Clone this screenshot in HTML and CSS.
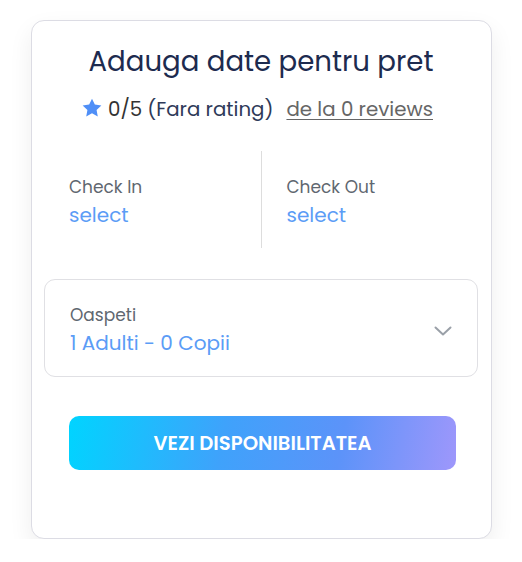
FILE: index.html
```html
<!DOCTYPE html>
<html lang="ro">
<head>
<meta charset="utf-8">
<title>Adauga date pentru pret</title>
<link rel="stylesheet" href="styles.css">
</head>
<body>
<div class="card">
  <h2 class="title">Adauga date pentru pret</h2>
  <div class="rating">
    <svg class="star" viewBox="0 0 24 24" width="22" height="22"><path d="M12 1.8l3.1 6.5 7.1.9-5.2 4.9 1.3 7.1L12 17.8l-6.3 3.4 1.3-7.1-5.2-4.9 7.1-.9z" fill="#4f8ff7"/></svg>
    <span class="score">0/5</span>
    <span class="norating">(Fara rating)</span>
    <a class="reviews" href="#">de la 0 reviews</a>
  </div>
  <div class="dates">
    <div class="date">
      <span class="label">Check In</span>
      <span class="value">select</span>
    </div>
    <div class="date">
      <span class="label">Check Out</span>
      <span class="value">select</span>
    </div>
  </div>
  <div class="guests">
    <div class="guests-text">
      <span class="label">Oaspeti</span>
      <span class="value">1 Adulti - 0 Copii</span>
    </div>
    <svg class="chevron" viewBox="0 0 18 10" width="18" height="10"><path d="M1.5 1.5L9 8.5l7.5-7" fill="none" stroke="#9aa0a8" stroke-width="2" stroke-linecap="round" stroke-linejoin="round"/></svg>
  </div>
  <button class="cta">VEZI DISPONIBILITATEA</button>
</div>
</body>
</html>
```
FILE: styles.css
```css
* { box-sizing: border-box; }
body {
  margin: 0;
  background: #fff;
  font-family: Poppins, "Open Sans", sans-serif;
}
.card {
  margin: 20px 0 0 31px;
  width: 461px;
  height: 519px;
  background: #fff;
  border: 1px solid #dcdce4;
  border-radius: 13px;
  box-shadow: 0 10px 24px rgba(0,0,0,0.07);
  padding: 23px 13px 0 12px;
  display: flex;
  flex-direction: column;
}
.title {
  margin: 0;
  font-weight: 400;
  font-size: 27.6px;
  line-height: 36px;
  color: #1d2b4f;
  text-align: center;
}
.rating {
  margin-top: 15px;
  display: flex;
  align-items: center;
  justify-content: center;
  gap: 5px;
  font-size: 19.8px;
  line-height: 28px;
  padding-right: 8px;
}
.star { margin-top: -3px; }
.score { color: #333; }
.norating { color: #2e3a59; margin-right: 8px; }
.reviews { color: #666; text-decoration: underline; text-underline-offset: 3px; }
.dates {
  margin-top: 28px;
  height: 97px;
  display: flex;
}
.date {
  flex: 1;
  display: flex;
  flex-direction: column;
  justify-content: center;
  padding-left: 25px;
  padding-top: 6px;
}
.date + .date { border-left: 1px solid #ddd; }
.label {
  font-size: 17px;
  line-height: 22px;
  color: #5f6770;
}
.value {
  font-size: 20px;
  line-height: 28px;
  color: #5b9cf6;
  margin-top: 3px;
}
.guests {
  margin-top: 31px;
  height: 98px;
  border: 1px solid #e0e0e4;
  border-radius: 11px;
  display: flex;
  align-items: center;
  justify-content: space-between;
  padding: 0 25px 0 25px;
}
.guests-text {
  display: flex;
  flex-direction: column;
  padding-top: 4px;
}
.chevron { margin-top: 6px; }
.cta {
  margin: 39px 0 0 25px;
  width: 387px;
  height: 54px;
  border: 0;
  border-radius: 10px;
  background: linear-gradient(100deg, #00d4ff 0%, #3fa2fb 40%, #5c93f9 70%, #9e97fb 100%);
  color: #fff;
  font-family: Poppins, "Open Sans", sans-serif;
  font-weight: 600;
  font-size: 19.6px;
}
```
